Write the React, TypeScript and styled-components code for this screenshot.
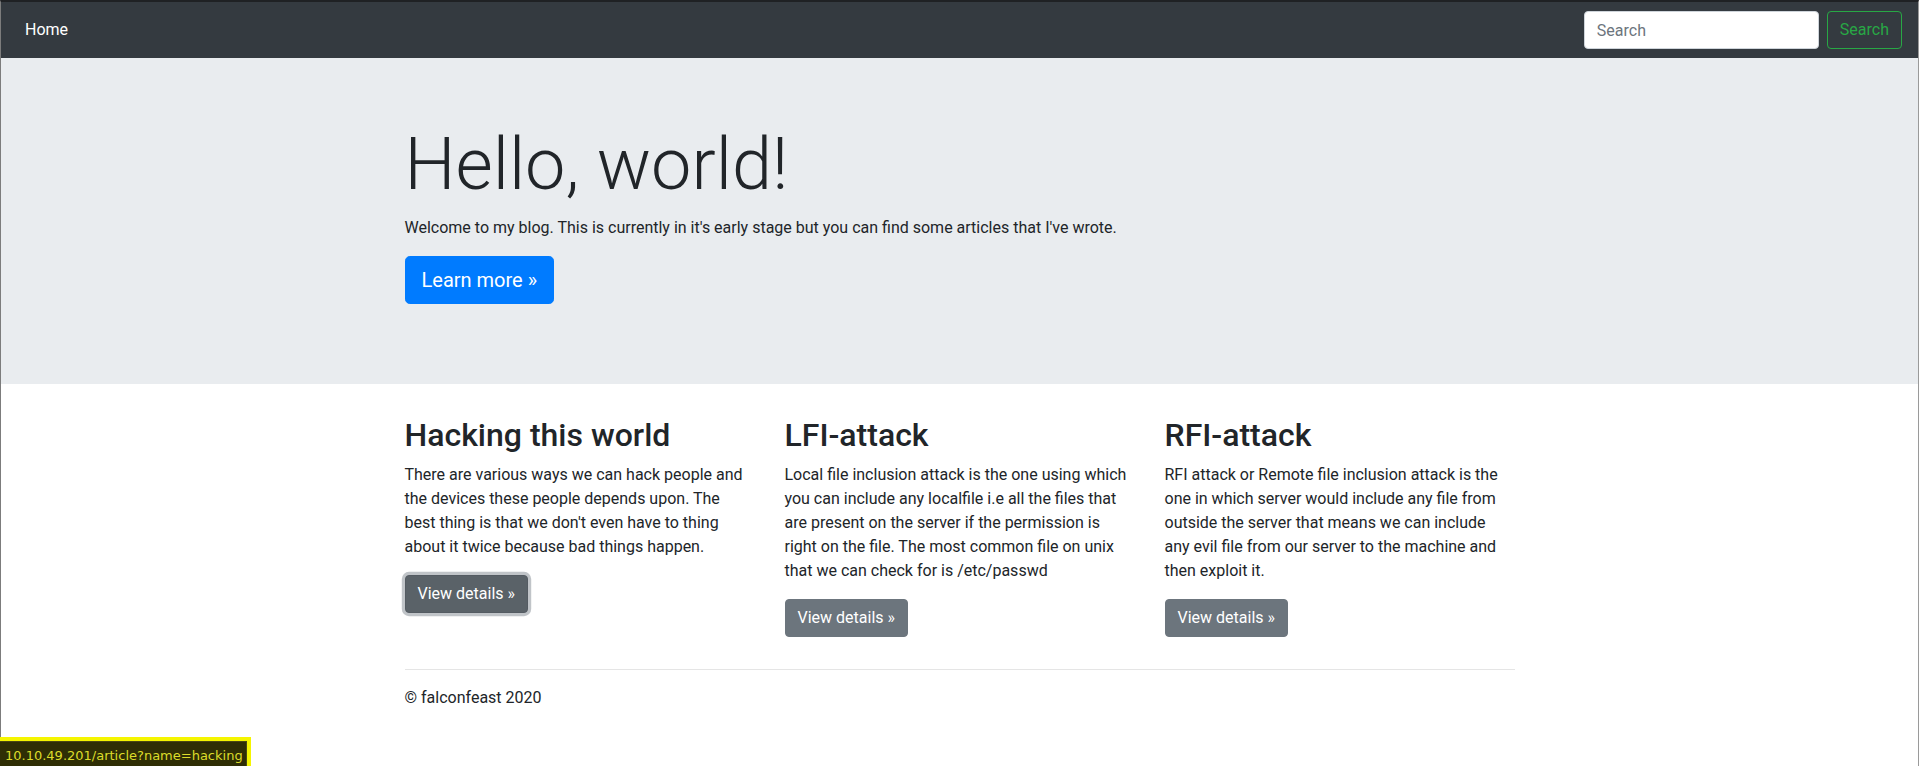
import React from "react";
import styled, { createGlobalStyle, css } from "styled-components";

const GlobalStyle = createGlobalStyle`
  * {
    box-sizing: border-box;
  }
  html, body {
    margin: 0;
    padding: 0;
    background: #fff;
  }
  body {
    font-family: Roboto, "Liberation Sans", Arial, sans-serif;
    font-size: 16px;
    line-height: 1.5;
    color: #212529;
  }
`;

const articles = [
  {
    title: "Hacking this world",
    text: "There are various ways we can hack people and the devices these people depends upon. The best thing is that we don't even have to thing about it twice because bad things happen.",
    focused: true,
  },
  {
    title: "LFI-attack",
    text: "Local file inclusion attack is the one using which you can include any localfile i.e all the files that are present on the server if the permission is right on the file. The most common file on unix that we can check for is /etc/passwd",
    focused: false,
  },
  {
    title: "RFI-attack",
    text: "RFI attack or Remote file inclusion attack is the one in which server would include any file from outside the server that means we can include any evil file from our server to the machine and then exploit it.",
    focused: false,
  },
];

function App() {
  return (
    <>
      <GlobalStyle />
      <Frame>
        <Navbar>
          <NavLink href="#">Home</NavLink>
          <SearchForm onSubmit={(e) => e.preventDefault()}>
            <SearchInput type="text" placeholder="Search" />
            <OutlineButton type="submit">Search</OutlineButton>
          </SearchForm>
        </Navbar>
        <main>
          <Jumbotron>
            <Container>
              <Display>Hello, world!</Display>
              <Lead>
                Welcome to my blog. This is currently in it's early stage but
                you can find some articles that I've wrote.
              </Lead>
              <Lead>
                <PrimaryButton href="#">Learn more &raquo;</PrimaryButton>
              </Lead>
            </Container>
          </Jumbotron>
          <Container>
            <Row>
              {articles.map((a) => (
                <Col key={a.title}>
                  <Title>{a.title}</Title>
                  <Text>{a.text}</Text>
                  <Text>
                    <SecondaryButton href="#" focused={a.focused}>
                      View details &raquo;
                    </SecondaryButton>
                  </Text>
                </Col>
              ))}
            </Row>
            <Rule />
          </Container>
        </main>
        <Container as="footer">
          <Text>&copy; falconfeast 2020</Text>
        </Container>
      </Frame>
      <StatusBubble>10.10.49.201/article?name=hacking</StatusBubble>
    </>
  );
}

const Frame = styled.div`
  width: 1919px;
  min-height: 100vh;
  border-top: 2px solid #1f2124;
  border-left: 1px solid #7c7c7c;
  border-right: 1px solid #9a9a9a;
`;

const Navbar = styled.nav`
  display: flex;
  align-items: center;
  justify-content: space-between;
  height: 56px;
  padding: 8px 16px;
  background: #343a40;
`;

const NavLink = styled.a`
  display: block;
  padding: 8px;
  color: #fff;
  text-decoration: none;
`;

const SearchForm = styled.form`
  display: flex;
  align-items: center;
  gap: 8px;
  margin: 0;
`;

const btnBase = css`
  display: inline-block;
  font-family: inherit;
  font-weight: 400;
  text-align: center;
  text-decoration: none;
  border: 1px solid transparent;
  cursor: pointer;
  padding: 6px 12px;
  font-size: 16px;
  line-height: 1.5;
  border-radius: 4px;
`;

const SearchInput = styled.input`
  width: 235px;
  height: 38px;
  padding: 6px 12px;
  font-family: inherit;
  font-size: 16px;
  line-height: 1.5;
  color: #495057;
  background: #fff;
  border: 1px solid #ced4da;
  border-radius: 4px;
  outline: none;
  &::placeholder {
    color: #6c757d;
  }
`;

const OutlineButton = styled.button`
  ${btnBase};
  color: #28a745;
  background: transparent;
  border-color: #28a745;
`;

const Jumbotron = styled.div`
  background: #e9ecef;
  padding: 64px 32px;
  margin-bottom: 32px;
`;

const Container = styled.div`
  width: 1140px;
  margin: 0 auto;
  padding: 0 15px;
`;

const Display = styled.h1`
  margin: 0 0 8px;
  font-size: 72px;
  font-weight: 300;
  line-height: 1.2;
`;

const Lead = styled.p`
  margin: 0 0 16px;
`;

const PrimaryButton = styled.a`
  ${btnBase};
  padding: 8px 16px;
  font-size: 20px;
  border-radius: 4.8px;
  color: #fff;
  background: #007bff;
  border-color: #007bff;
`;

const Row = styled.div`
  display: grid;
  grid-template-columns: repeat(3, 1fr);
  margin: 0 -15px;
`;

const Col = styled.div`
  padding: 0 15px;
`;

const Title = styled.h2`
  margin: 0 0 8px;
  font-size: 32px;
  font-weight: 500;
  line-height: 1.2;
`;

const Text = styled.p`
  margin: 0 0 16px;
`;

const SecondaryButton = styled.a<{ focused: boolean }>`
  ${btnBase};
  color: #fff;
  background: ${({ focused }) => (focused ? "#5a6268" : "#6c757d")};
  border-color: ${({ focused }) => (focused ? "#545b62" : "#6c757d")};
  box-shadow: ${({ focused }) =>
    focused ? "0 0 0 3.2px rgba(130, 138, 145, 0.5)" : "none"};
`;

const Rule = styled.hr`
  margin: 16px 0;
  border: 0;
  border-top: 1px solid rgba(0, 0, 0, 0.1);
`;

const StatusBubble = styled.div`
  position: fixed;
  left: 0;
  bottom: 0;
  height: 29px;
  padding: 6px 4px 0 5px;
  font-family: "DejaVu Sans", Verdana, sans-serif;
  font-size: 13px;
  line-height: 17px;
  color: #dcdc2a;
  background: #2f2e05;
  border-top: 4px solid #f5f500;
  border-right: 4px solid #f5f500;
  box-shadow: inset -1px 1px 0 #4a4815;
  white-space: nowrap;
`;

export default App;
